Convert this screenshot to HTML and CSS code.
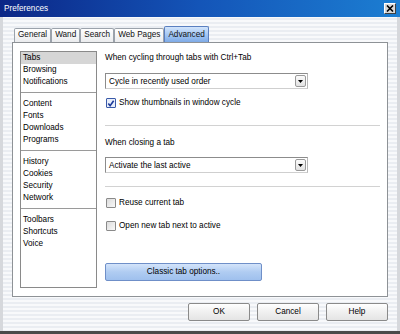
FILE: index.html
```html
<!DOCTYPE html>
<html>
<head>
<meta charset="utf-8">
<link rel="stylesheet" href="styles.css">
</head>
<body>
<div class="window">
  <div class="titlebar">
    <span class="title">Preferences</span>
    <span class="close"><svg width="8" height="7" viewBox="0 0 8 7"><path d="M1 0.5 L7 6.5 M7 0.5 L1 6.5" stroke="#000" stroke-width="1.6"/></svg></span>
  </div>
  <div class="body">
    <div class="tabs">
      <div class="tab">General</div>
      <div class="tab">Wand</div>
      <div class="tab">Search</div>
      <div class="tab">Web Pages</div>
      <div class="tab active">Advanced</div>
    </div>
    <div class="panel">
      <div class="list">
        <div class="item selected">Tabs</div>
        <div class="item">Browsing</div>
        <div class="item">Notifications</div>
        <div class="lsep"></div>
        <div class="item">Content</div>
        <div class="item">Fonts</div>
        <div class="item">Downloads</div>
        <div class="item">Programs</div>
        <div class="lsep"></div>
        <div class="item">History</div>
        <div class="item">Cookies</div>
        <div class="item">Security</div>
        <div class="item">Network</div>
        <div class="lsep"></div>
        <div class="item">Toolbars</div>
        <div class="item">Shortcuts</div>
        <div class="item">Voice</div>
      </div>
      <div class="content">
        <div class="label l1">When cycling through tabs with Ctrl+Tab</div>
        <div class="select s1"><span class="stext">Cycle in recently used order</span><span class="arrow"><svg width="5" height="3" viewBox="0 0 5 3"><path d="M0 0 H5 L2.5 3 Z" fill="#000"/></svg></span></div>
        <div class="check c1"><span class="box checked"><svg width="9" height="9" viewBox="0 0 9 9"><path d="M1.5 4.5 L3.5 7 L7.5 1.5" stroke="#1c3a9a" stroke-width="1.8" fill="none"/></svg></span>Show thumbnails in window cycle</div>
        <div class="hr h1"></div>
        <div class="label l2">When closing a tab</div>
        <div class="select s2"><span class="stext">Activate the last active</span><span class="arrow"><svg width="5" height="3" viewBox="0 0 5 3"><path d="M0 0 H5 L2.5 3 Z" fill="#000"/></svg></span></div>
        <div class="hr h2"></div>
        <div class="check c2"><span class="box"></span>Reuse current tab</div>
        <div class="check c3"><span class="box"></span>Open new tab next to active</div>
        <div class="bluebtn">Classic tab options..</div>
      </div>
    </div>
    <div class="footer">
      <div class="btn">OK</div>
      <div class="btn">Cancel</div>
      <div class="btn">Help</div>
    </div>
  </div>
</div>
</body>
</html>
```

FILE: styles.css
```css
* { box-sizing: border-box; }
html, body { margin: 0; padding: 0; }
body {
  font-family: "Liberation Sans", Arial, sans-serif;
  font-size: 8.2px;
  color: #000;
  width: 400px;
  height: 334px;
  overflow: hidden;
}
.window {
  width: 400px;
  height: 334px;
  display: flex;
  flex-direction: column;
  background: repeating-linear-gradient(to bottom, #f8f9fb 0px, #f8f9fb 2px, #eaedf2 2px, #eaedf2 4px);
  border-bottom: 3px solid #4a4a4a;
}
.titlebar {
  height: 17px;
  background: linear-gradient(to right, #0b2686 0%, #1455b8 50%, #1c7ed2 100%);
  display: flex;
  align-items: center;
  justify-content: space-between;
  padding: 0 4px 0 4px;
  color: #fff;
}
.title { font-size: 8.2px; }
.close {
  width: 12px;
  height: 11px;
  background: #d8d8d8;
  border: 1px solid;
  border-color: #fff #404040 #404040 #fff;
  display: flex;
  align-items: center;
  justify-content: center;
}
.body {
  flex: 1;
  display: flex;
  flex-direction: column;
  padding: 9px 9px 0 9px;
  border-left: 3px solid #d6d8dc;
  border-right: 3px solid #d6d8dc;
}
.tabs {
  display: flex;
  align-items: flex-end;
  height: 16px;
  padding-left: 2px;
}
.tab {
  height: 14px;
  padding: 0 3px;
  line-height: 12px;
  border: 1px solid #9ba2ab;
  border-bottom: none;
  border-radius: 2px 2px 0 0;
  background: linear-gradient(to bottom, #ffffff, #ebecee);
  color: #111;
  white-space: nowrap;
}
.tab.active {
  height: 16px;
  line-height: 15px;
  background: linear-gradient(to bottom, #d2e4fb, #9cc2f2 60%, #7eaae6);
  border-color: #5a7fc0;
}
.panel {
  height: 255px;
  border: 1px solid #8e9296;
  background: #fff;
  display: flex;
  padding: 8px 7px 8px 7px;
  gap: 8px;
}
.list {
  width: 78px;
  border: 1px solid #8a8a8a;
  background: #fff;
  display: flex;
  flex-direction: column;
}
.item {
  height: 12px;
  line-height: 12px;
  padding-left: 2px;
}
.item.selected { background: #d6d6d6; }
.lsep {
  height: 1px;
  background: #9a9a9a;
  margin: 4px 0 5px 0;
}
.content {
  flex: 1;
  display: flex;
  flex-direction: column;
}
.label { height: 12px; line-height: 12px; }
.l1 { margin-top: 1px; }
.select {
  width: 203px;
  height: 16px;
  border: 1px solid #8c8c8c;
  border-right-color: #b8b8b8;
  border-bottom-color: #cfcfcf;
  display: flex;
  align-items: center;
  justify-content: space-between;
  padding: 0 1px 0 3px;
  background: #fff;
}
.arrow {
  width: 11px;
  height: 12px;
  border: 1px solid #9a9a9a;
  border-radius: 2px;
  background: linear-gradient(to bottom, #fbfbfb, #e2e2e2);
  display: flex;
  align-items: center;
  justify-content: center;
}
.s1 { margin-top: 9px; }
.s2 { margin-top: 8px; }
.check {
  height: 12px;
  line-height: 12px;
  display: flex;
  align-items: center;
  gap: 3px;
  padding-left: 1px;
}
.box {
  width: 10px;
  height: 10px;
  border: 1px solid #8a8a8a;
  border-radius: 1px;
  background: linear-gradient(to bottom right, #dcdcdc, #f8f8f8);
  display: flex;
  align-items: center;
  justify-content: center;
}
.box.checked {
  border-color: #3a5aa8;
  background: #e8eefa;
}
.c1 { margin-top: 8px; }
.c2 { margin-top: 10px; }
.c3 { margin-top: 11px; }
.hr { width: 275px; height: 1px; background: #d2d2d2; }
.h1 { margin-top: 16px; }
.l2 { margin-top: 11px; }
.h2 { margin-top: 13px; }
.bluebtn {
  margin-top: 31px;
  width: 157px;
  height: 18px;
  border: 1px solid #6f8fc8;
  border-radius: 2px;
  background: linear-gradient(to bottom, #d4e4fa, #b0ccf2 50%, #9fc0ee);
  text-align: center;
  line-height: 16px;
}
.footer {
  display: flex;
  justify-content: flex-end;
  gap: 7px;
  margin-top: 6px;
}
.btn {
  width: 62px;
  height: 18px;
  border: 1px solid #8a8a8a;
  border-radius: 2px;
  background: linear-gradient(to bottom, #ffffff, #f0f0f0 50%, #e4e4e4);
  text-align: center;
  line-height: 16px;
}
```
